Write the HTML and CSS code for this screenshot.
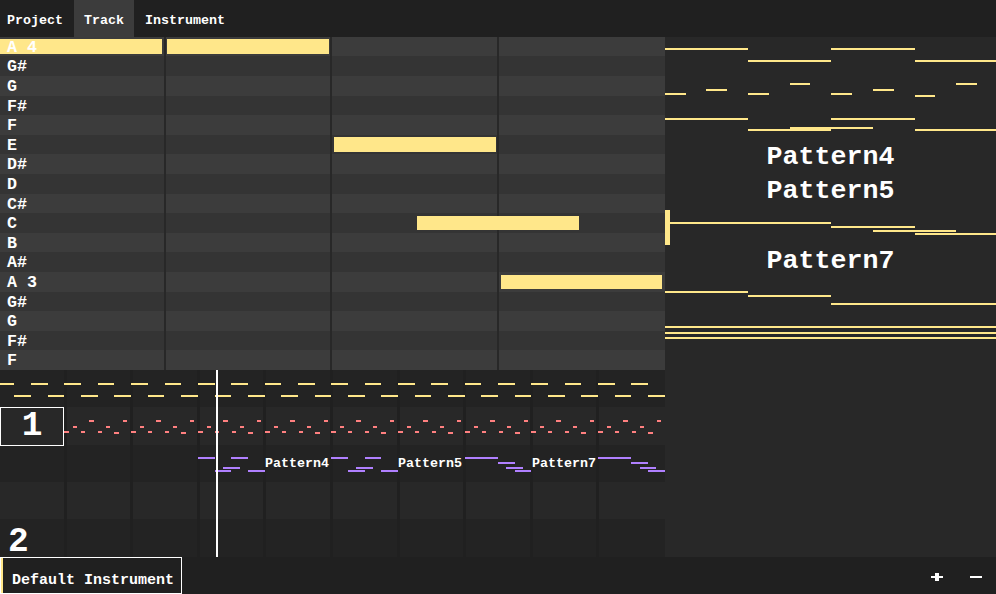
FILE: index.html
```html
<!DOCTYPE html>
<html lang="en">
<head>
<meta charset="utf-8">
<title>Track</title>
<link rel="stylesheet" href="styles.css">
</head>
<body>
<div class="app">
  <nav class="tabs">
    <div class="tab project">Project</div>
    <div class="tab active">Track</div>
    <div class="tab">Instrument</div>
  </nav>
  <main class="main">
    <div class="editor">
      <section class="roll">
        <div class="key"><span>A 4</span></div>
        <div class="key"><span>G#</span></div>
        <div class="key"><span>G</span></div>
        <div class="key"><span>F#</span></div>
        <div class="key"><span>F</span></div>
        <div class="key"><span>E</span></div>
        <div class="key"><span>D#</span></div>
        <div class="key"><span>D</span></div>
        <div class="key"><span>C#</span></div>
        <div class="key"><span>C</span></div>
        <div class="key"><span>B</span></div>
        <div class="key"><span>A#</span></div>
        <div class="key"><span>A 3</span></div>
        <div class="key"><span>G#</span></div>
        <div class="key"><span>G</span></div>
        <div class="key"><span>F#</span></div>
        <div class="key"><span>F</span></div>
        <svg class="overlay" width="665" height="333">
          <path class="bars" d="M165 0v333M331 0v333M498 0v333"/>
          <g class="notes">
            <rect x="0" y="2" width="162" height="15"/>
            <rect x="167" y="2" width="162" height="15"/>
            <rect x="334" y="100" width="162" height="15"/>
            <rect x="417" y="179" width="162" height="14"/>
            <rect x="501" y="238" width="161" height="14"/>
          </g>
        </svg>
      </section>
      <section class="tracks">
        <div class="track">
          <svg class="overlay yellow" width="665" height="37">
            <path d="M0 14h14M31 14h17M64 14h17M98 14h16M131 14h17M165 14h16M198 14h17M231 14h17M265 14h16M298 14h17M331 14h17M365 14h16M398 14h17M431 14h17M465 14h16M498 14h17M531 14h17M565 14h16M598 14h17M631 14h17"/>
            <path d="M14 26h17M48 26h16M81 26h17M114 26h17M148 26h16M181 26h17M215 26h16M248 26h17M281 26h17M315 26h16M348 26h17M381 26h17M415 26h16M448 26h17M481 26h17M515 26h16M548 26h17M581 26h17M615 26h16M648 26h17"/>
          </svg>
        </div>
        <div class="track">
          <svg class="overlay red" width="665" height="38">
            <defs><path id="riff" d="M0 25h5M9 20h4M17 25h4M25 14h5M34 25h4M42 20h4M50 26h5M59 14h4"/></defs>
            <use href="#riff" x="64"/><use href="#riff" x="131"/><use href="#riff" x="198"/>
            <use href="#riff" x="265"/><use href="#riff" x="331"/><use href="#riff" x="398"/>
            <use href="#riff" x="465"/><use href="#riff" x="531"/><use href="#riff" x="598"/>
          </svg>
          <div class="cursor">1</div>
        </div>
        <div class="track">
          <svg class="overlay purple" width="665" height="37">
            <path d="M198 13h17M231 13h17M215 26h16M248 26h17M223 23h17"/>
            <path d="M331 13h17M365 13h16M348 26h17M381 26h17M356 23h17"/>
            <path d="M465 13h33M498 18h17M506 23h17M515 26h16"/>
            <path d="M598 13h33M631 18h17M640 23h16M648 26h17"/>
          </svg>
          <span class="clip clip-a">Pattern4</span>
          <span class="clip clip-b">Pattern5</span>
          <span class="clip clip-c">Pattern7</span>
        </div>
        <div class="track"></div>
        <div class="track"><span class="count">2</span></div>
        <div class="playhead"></div>
      </section>
    </div>
    <aside class="patterns">
      <div class="pattern"><svg class="yellow" width="331" height="35"><path d="M0 12h83M166 12h84M83 24h83M250 24h81"/></svg></div>
      <div class="pattern"><svg class="yellow" width="331" height="34"><path d="M0 22h21M41 18h21M83 22h21M125 12h20M166 22h21M208 18h21M250 24h20M291 12h21"/></svg></div>
      <div class="pattern"><svg class="yellow" width="331" height="35"><path d="M0 13h83M166 13h84M83 24h83M250 24h81M125 22h83"/></svg></div>
      <div class="pattern"><span>Pattern4</span></div>
      <div class="pattern"><span>Pattern5</span></div>
      <div class="pattern selected"><svg class="yellow" width="326" height="35"><path d="M0 13h161M161 17h84M203 21h83M245 24h81"/></svg></div>
      <div class="pattern"><span>Pattern7</span></div>
      <div class="pattern"><svg class="yellow" width="331" height="34"><path d="M0 12h83M83 16h83M166 24h165"/></svg></div>
      <div class="pattern"><svg class="yellow" width="331" height="35"><path d="M0 13h331M0 19h331M0 24h331"/></svg></div>
    </aside>
  </main>
  <footer class="footer">
    <div class="instrument">Default Instrument</div>
    <div class="actions">
      <svg width="12" height="8"><path d="M0 3h12v2H0zM4 0h4v8H4z"/></svg>
      <svg width="12" height="8"><path d="M0 3h12v2H0z"/></svg>
    </div>
  </footer>
</div>
</body>
</html>
```
FILE: styles.css
```css
* { box-sizing: border-box; }

body {
  margin: 0;
  background: #282828;
  color: #fff;
  font: bold 13.33px/16px "Liberation Mono", monospace;
}

svg { display: block; shape-rendering: crispEdges; flex: none; }

.app {
  display: grid;
  grid-template-rows: 37px 520px 37px;
  width: 996px;
  height: 594px;
  overflow: hidden;
}

.tabs { display: flex; background: #202020; }
.tab {
  display: flex;
  align-items: center;
  padding: 4px 11px 0 11px;
}
.project { width: 74px; padding-left: 7px; }
.active { width: 60px; padding-left: 10px; background: #3c3c3c; }

.main { display: grid; grid-template-columns: 665px 331px; }
.editor { display: grid; grid-template-rows: 333px 187px; }

.overlay { position: absolute; left: 0; top: 0; }

.roll {
  position: relative;
  display: grid;
  grid-template-rows: 19px 20px 20px 19px 20px 19px 20px 20px 19px 20px 19px 20px 20px 19px 20px 19px 20px;
}
.key {
  padding: 2px 0 0 7px;
  background: #343434;
  font-size: 16.67px;
  line-height: 17px;
}
.key:nth-child(odd) { background: #3c3c3c; }
.key span { position: relative; z-index: 1; }
.bars { stroke: #282828; stroke-width: 2; }
.notes { fill: #ffe78a; }

.yellow, .red, .purple { fill: none; stroke-width: 2; }
.yellow { stroke: #ffe78a; }
.red { stroke: #ff8080; }
.purple { stroke: #b080ff; }

.tracks {
  position: relative;
  display: grid;
  grid-template-rows: 37px 38px 37px 37px 38px;
}
.track {
  position: relative;
  display: flex;
  align-items: center;
  background: repeating-linear-gradient(90deg, transparent 0 63.6px, #202020 63.6px 66.6px) 0 0 / 601px 100% no-repeat #232323;
}
.track:nth-child(even) { background-color: #282828; }
.cursor {
  position: relative;
  width: 64px;
  height: 39px;
  margin-bottom: -1px;
  border: 1px solid #fff;
  background: #282828;
  font-size: 34.5px;
  line-height: 35px;
  text-align: center;
  z-index: 1;
}
.clip { position: relative; width: 64px; }
.clip-a { margin-left: 265px; }
.clip-b { margin-left: 69px; }
.clip-c { margin-left: 70px; }
.count { padding: 6px 0 0 8px; font-size: 34.5px; line-height: 31px; }
.playhead {
  position: absolute;
  left: 216px;
  top: 0;
  width: 2px;
  height: 187px;
  background: #fff;
}

.patterns {
  display: grid;
  grid-template-rows: 35px 34px 35px 35px 34px 35px 35px 34px 35px;
  align-content: start;
}
.pattern {
  display: flex;
  align-items: center;
  justify-content: center;
  font-size: 26.67px;
  line-height: 31px;
}
.pattern span { padding-bottom: 3px; }
.selected { border-left: 5px solid #ffe78a; }

.footer { display: flex; justify-content: space-between; background: #202020; }
.instrument {
  width: 182px;
  padding: 15px 0 0 11px;
  border: 1px solid #fff;
  box-shadow: inset 2px 0 #ffe78a;
  font-size: 15px;
  white-space: nowrap;
}
.actions { display: flex; gap: 27px; padding: 16px 14px 0 0; fill: #fff; }
```
